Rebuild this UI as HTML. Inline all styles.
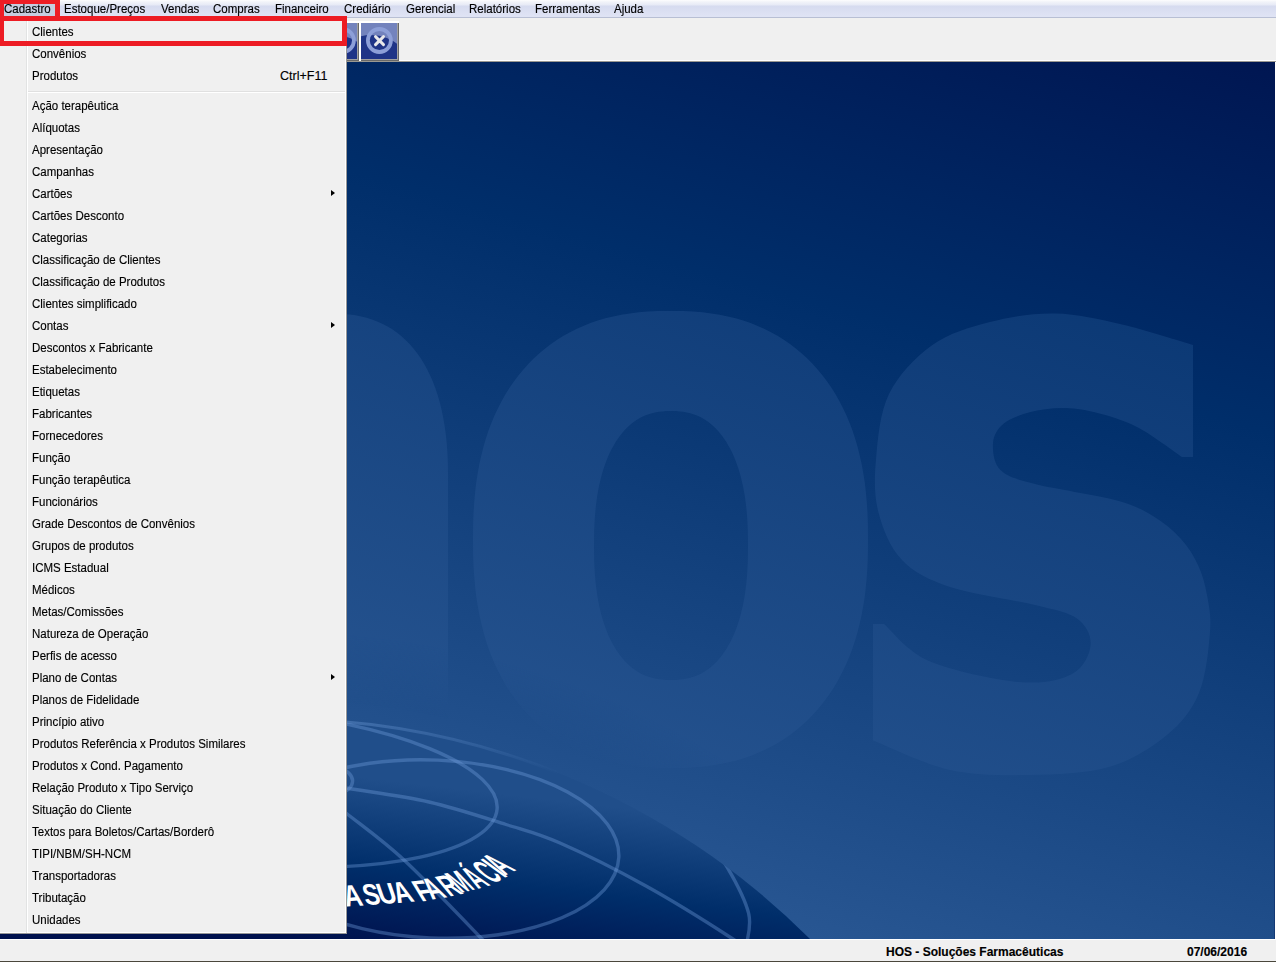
<!DOCTYPE html>
<html><head><meta charset="utf-8">
<style>
*{box-sizing:border-box}
html,body{margin:0;padding:0}
body{width:1276px;height:962px;position:relative;overflow:hidden;background:#f0f0f0;font-family:"Liberation Sans",sans-serif;font-size:12.5px;color:#000;-webkit-text-stroke:0.15px #000}
.abs{position:absolute}
#menubar{position:absolute;left:0;top:0;width:1276px;height:18px;background:linear-gradient(#fdfdfe 0px,#f1f3f9 2px,#e7eaf6 5px,#d6dbef 6px,#dfe3f4 16px);border-bottom:1px solid #b8bfd4}
.mb{position:absolute;top:2px;line-height:14px;white-space:nowrap;transform:scaleX(0.92);transform-origin:0 0}
#toolbar{position:absolute;left:0;top:18px;width:1276px;height:44px;background:#f0f0f0}
#bg{position:absolute;left:0;top:62px;width:1276px;height:877px;-webkit-text-stroke:0}
#popup{position:absolute;left:-2px;top:17px;width:349px;height:917px;background:#f0f0f0;border:1px solid #979797;box-shadow:inset -1px -1px 0 #fff}
.it{position:absolute;left:32px;height:22px;line-height:22px;white-space:nowrap;transform:scaleX(0.92);transform-origin:0 0}
.sc{position:absolute;left:280px;height:22px;line-height:22px;white-space:nowrap}
.arr{position:absolute;left:331px;width:0;height:0;border-top:3.5px solid transparent;border-bottom:3.5px solid transparent;border-left:4px solid #000}
#gut{position:absolute;left:26px;top:18px;width:2px;height:915px;border-left:1px solid #e2e3e3;border-right:1px solid #fff}
#sep{position:absolute;left:28px;top:91px;width:317px;height:2px;border-top:1px solid #e0e0e0;border-bottom:1px solid #fff}
#status{position:absolute;left:0;top:939px;width:1276px;height:23px;background:#f0f0f0;border-top:1px solid #fff;border-bottom:1px solid #4a473c}
.st{position:absolute;top:945px;font-weight:bold;font-size:12px;line-height:14px;white-space:nowrap}
.red{position:absolute;border:solid #ed1c24}
</style></head><body>
<div id="bg"><svg width="1276" height="877" viewBox="0 62 1276 877" style="display:block">
<defs>
<linearGradient id="gb" gradientUnits="userSpaceOnUse" x1="1276" y1="62" x2="943" y2="1229">
<stop offset="0" stop-color="rgb(0,22,82)"/><stop offset="0.295" stop-color="rgb(0,46,106)"/><stop offset="1" stop-color="rgb(56,102,162)"/>
</linearGradient>
<linearGradient id="gl" gradientUnits="userSpaceOnUse" x1="1276" y1="62" x2="825" y2="1415">
<stop offset="0" stop-color="rgb(0,45,105)"/><stop offset="1" stop-color="rgb(59,105,165)"/>
</linearGradient>
<linearGradient id="gg" gradientUnits="userSpaceOnUse" x1="425" y1="785" x2="405.7" y2="949.8">
<stop offset="0" stop-color="rgb(32,78,138)"/><stop offset="0.533" stop-color="rgb(0,46,106)"/><stop offset="1" stop-color="rgb(0,18,78)"/>
</linearGradient>
<linearGradient id="go" gradientUnits="userSpaceOnUse" x1="346" y1="0" x2="560" y2="0">
<stop offset="0" stop-color="#6d9ad6" stop-opacity="0.4"/><stop offset="0.6" stop-color="#6d9ad6" stop-opacity="0.2"/><stop offset="1" stop-color="#6d9ad6" stop-opacity="0"/>
</linearGradient>
<filter id="blur" x="-5%" y="-5%" width="110%" height="110%"><feGaussianBlur stdDeviation="0.7"/></filter>
<clipPath id="cg"><circle cx="279" cy="1470" r="751"/></clipPath>
<radialGradient id="gm" gradientUnits="userSpaceOnUse" cx="279" cy="1470" r="851"><stop offset="0" stop-color="#000"/><stop offset="0.905" stop-color="#000"/><stop offset="0.985" stop-color="#fff"/><stop offset="1" stop-color="#fff"/></radialGradient>
<mask id="lm" maskUnits="userSpaceOnUse" x="0" y="62" width="1276" height="877"><rect x="0" y="62" width="1276" height="877" fill="url(#gm)"/></mask>
</defs>
<rect x="0" y="62" width="1276" height="877" fill="url(#gb)"/>
<g fill="url(#gl)" mask="url(#lm)">
<path d="M868.0,539.5 L867.9,554.0 L867.5,565.7 L866.8,576.4 L865.9,586.6 L864.8,596.4 L863.3,605.7 L861.7,614.8 L859.7,623.6 L857.6,632.1 L855.1,640.4 L852.5,648.4 L849.5,656.2 L846.4,663.7 L842.9,671.0 L839.3,678.1 L835.4,684.9 L831.3,691.4 L826.9,697.8 L822.4,703.8 L817.6,709.6 L812.5,715.2 L807.3,720.5 L801.8,725.5 L796.1,730.3 L790.3,734.8 L784.2,739.0 L777.9,743.0 L771.4,746.6 L764.6,750.0 L757.7,753.1 L750.6,755.9 L743.2,758.4 L735.6,760.7 L727.8,762.6 L719.6,764.3 L711.2,765.6 L702.4,766.7 L693.1,767.4 L683.1,767.9 L670.5,768.0 L657.9,767.9 L647.9,767.4 L638.6,766.7 L629.8,765.6 L621.4,764.3 L613.2,762.6 L605.4,760.7 L597.8,758.4 L590.4,755.9 L583.3,753.1 L576.4,750.0 L569.6,746.6 L563.1,743.0 L556.8,739.0 L550.7,734.8 L544.9,730.3 L539.2,725.5 L533.7,720.5 L528.5,715.2 L523.4,709.6 L518.6,703.8 L514.1,697.8 L509.7,691.4 L505.6,684.9 L501.7,678.1 L498.1,671.0 L494.6,663.7 L491.5,656.2 L488.5,648.4 L485.9,640.4 L483.4,632.1 L481.3,623.6 L479.3,614.8 L477.7,605.7 L476.2,596.4 L475.1,586.6 L474.2,576.4 L473.5,565.7 L473.1,554.0 L473.0,539.5 L473.1,525.0 L473.5,513.3 L474.2,502.6 L475.1,492.4 L476.2,482.6 L477.7,473.3 L479.3,464.2 L481.3,455.4 L483.4,446.9 L485.9,438.6 L488.5,430.6 L491.5,422.8 L494.6,415.3 L498.1,408.0 L501.7,400.9 L505.6,394.1 L509.7,387.6 L514.1,381.2 L518.6,375.2 L523.4,369.4 L528.5,363.8 L533.7,358.5 L539.2,353.5 L544.9,348.7 L550.7,344.2 L556.8,340.0 L563.1,336.0 L569.6,332.4 L576.4,329.0 L583.3,325.9 L590.4,323.1 L597.8,320.6 L605.4,318.3 L613.2,316.4 L621.4,314.7 L629.8,313.4 L638.6,312.3 L647.9,311.6 L657.9,311.1 L670.5,311.0 L683.1,311.1 L693.1,311.6 L702.4,312.3 L711.2,313.4 L719.6,314.7 L727.8,316.4 L735.6,318.3 L743.2,320.6 L750.6,323.1 L757.7,325.9 L764.6,329.0 L771.4,332.4 L777.9,336.0 L784.2,340.0 L790.3,344.2 L796.1,348.7 L801.8,353.5 L807.3,358.5 L812.5,363.8 L817.6,369.4 L822.4,375.2 L826.9,381.2 L831.3,387.6 L835.4,394.1 L839.3,400.9 L842.9,408.0 L846.4,415.3 L849.5,422.8 L852.5,430.6 L855.1,438.6 L857.6,446.9 L859.7,455.4 L861.7,464.2 L863.3,473.3 L864.8,482.6 L865.9,492.4 L866.8,502.6 L867.5,513.3 L867.9,525.0Z M747.9,536.9 L747.8,530.1 L747.5,523.8 L747.2,517.8 L746.7,512.0 L746.2,506.5 L745.5,501.2 L744.8,496.0 L743.9,491.0 L743.0,486.1 L741.9,481.4 L740.8,476.8 L739.6,472.4 L738.2,468.1 L736.8,463.9 L735.3,459.9 L733.7,456.1 L732.0,452.3 L730.2,448.8 L728.3,445.4 L726.4,442.1 L724.3,439.0 L722.2,436.0 L720.0,433.2 L717.7,430.6 L715.3,428.1 L712.9,425.7 L710.3,423.6 L707.7,421.6 L705.0,419.8 L702.2,418.1 L699.3,416.6 L696.4,415.3 L693.3,414.2 L690.2,413.2 L686.9,412.4 L683.4,411.8 L679.8,411.4 L675.9,411.1 L671.0,411.0 L666.1,411.1 L662.2,411.4 L658.6,411.8 L655.1,412.4 L651.8,413.2 L648.7,414.2 L645.6,415.3 L642.7,416.6 L639.8,418.1 L637.0,419.8 L634.3,421.6 L631.7,423.6 L629.1,425.7 L626.7,428.1 L624.3,430.6 L622.0,433.2 L619.8,436.0 L617.7,439.0 L615.6,442.1 L613.7,445.4 L611.8,448.8 L610.0,452.3 L608.3,456.1 L606.7,459.9 L605.2,463.9 L603.8,468.1 L602.4,472.4 L601.2,476.8 L600.1,481.4 L599.0,486.1 L598.1,491.0 L597.2,496.0 L596.5,501.2 L595.8,506.5 L595.3,512.0 L594.8,517.8 L594.5,523.8 L594.2,530.1 L594.1,536.9 L594.0,545.5 L594.1,554.1 L594.2,560.9 L594.5,567.2 L594.8,573.2 L595.3,579.0 L595.8,584.5 L596.5,589.8 L597.2,595.0 L598.1,600.0 L599.0,604.9 L600.1,609.6 L601.2,614.2 L602.4,618.6 L603.8,622.9 L605.2,627.1 L606.7,631.1 L608.3,634.9 L610.0,638.7 L611.8,642.2 L613.7,645.6 L615.6,648.9 L617.7,652.0 L619.8,655.0 L622.0,657.8 L624.3,660.4 L626.7,662.9 L629.1,665.3 L631.7,667.4 L634.3,669.4 L637.0,671.2 L639.8,672.9 L642.7,674.4 L645.6,675.7 L648.7,676.8 L651.8,677.8 L655.1,678.6 L658.6,679.2 L662.2,679.6 L666.1,679.9 L671.0,680.0 L675.9,679.9 L679.8,679.6 L683.4,679.2 L686.9,678.6 L690.2,677.8 L693.3,676.8 L696.4,675.7 L699.3,674.4 L702.2,672.9 L705.0,671.2 L707.7,669.4 L710.3,667.4 L712.9,665.3 L715.3,662.9 L717.7,660.4 L720.0,657.8 L722.2,655.0 L724.3,652.0 L726.4,648.9 L728.3,645.6 L730.2,642.2 L732.0,638.7 L733.7,634.9 L735.3,631.1 L736.8,627.1 L738.2,622.9 L739.6,618.6 L740.8,614.2 L741.9,609.6 L743.0,604.9 L743.9,600.0 L744.8,595.0 L745.5,589.8 L746.2,584.5 L746.7,579.0 L747.2,573.2 L747.5,567.2 L747.8,560.9 L747.9,554.1 L748.0,545.5Z" fill-rule="evenodd"/>
<path d="M220,314 L338,314 C402,314 448,365 448,473 L448,770 L220,770 Z"/>
<path d="M1193,343 L1193,457 L1182,457 C1174.5,452.0 1151.5,434.4 1137.0,427.0 C1122.5,419.6 1107.2,415.5 1094.7,412.3 C1082.2,409.1 1072.9,408.0 1062.0,408.0 C1051.1,408.0 1039.2,409.7 1029.5,412.3 C1019.8,414.9 1009.6,418.6 1003.5,423.7 C997.4,428.8 993.5,435.3 993.0,443.0 C992.5,450.7 993.5,463.2 1000.5,470.0 C1007.5,476.8 1015.9,479.0 1035.0,484.0 C1054.1,489.0 1095.3,494.7 1115.0,500.0 C1134.7,505.3 1142.0,509.5 1153.0,516.0 C1164.0,522.5 1173.5,530.8 1181.0,539.0 C1188.5,547.2 1193.7,555.7 1198.0,565.0 C1202.3,574.3 1205.0,583.8 1207.0,595.0 C1209.0,606.2 1211.3,615.7 1210.0,632.0 C1208.7,648.3 1206.2,675.8 1199.0,693.0 C1191.8,710.2 1182.0,722.7 1167.0,735.0 C1152.0,747.3 1131.9,760.3 1109.0,767.0 C1086.1,773.7 1056.1,774.5 1029.6,775.0 C1003.1,775.5 976.1,775.7 950.0,770.0 C923.9,764.3 885.8,745.5 873.0,740.6 L873,624 L884,624 C891.5,630.2 906.5,651.3 929.0,661.0 C951.5,670.7 995.2,679.8 1019.0,682.0 C1042.8,684.2 1060.1,680.2 1072.0,674.0 C1083.9,667.8 1089.8,654.2 1090.6,645.0 C1091.4,635.8 1086.3,625.3 1077.0,618.6 C1067.7,611.9 1056.2,610.3 1035.0,605.0 C1013.8,599.7 972.2,594.5 950.0,587.0 C927.8,579.5 913.9,572.4 902.0,560.0 C890.1,547.6 882.8,529.4 878.5,512.6 C874.2,495.9 874.2,479.3 876.0,459.5 C877.8,439.7 879.7,413.0 889.0,394.0 C898.3,375.0 914.9,357.4 931.7,345.4 C948.5,333.4 969.5,327.3 990.0,322.0 C1010.5,316.7 1033.0,313.1 1055.0,313.5 C1077.0,313.9 1099.0,319.2 1122.0,324.5 C1145.0,329.8 1181.2,341.6 1193.0,345.0 Z"/>
</g>
<circle cx="279" cy="1470" r="751" fill="url(#gg)"/>
<circle cx="279" cy="1470" r="751" fill="none" stroke="url(#go)" stroke-width="3"/>
<g clip-path="url(#cg)"><g fill="none" stroke="#6b98d6" stroke-opacity="0.4" stroke-width="3.4" filter="url(#blur)">
<ellipse cx="251" cy="788" rx="247" ry="77" transform="rotate(4.9 251 788)"/>
<ellipse cx="434" cy="849" rx="185" ry="89" transform="rotate(2.6 434 849)"/>
<ellipse cx="300" cy="781" rx="52.6" ry="20.6"/>
<path d="M300,780 C307.7,781.3 324.5,784.3 346.0,788.0 C367.5,791.7 402.3,795.9 429.0,802.0 C455.7,808.1 484.2,817.7 506.0,824.5 C527.8,831.3 536.7,832.8 560.0,843.0 C583.3,853.2 617.5,870.2 646.0,886.0 C674.5,901.8 712.0,925.4 731.0,937.7 C750.0,950.0 755.2,956.3 760.0,960.0"/>
<path d="M320,792 C324.3,795.5 332.0,801.7 346.0,813.0 C360.0,824.3 381.7,839.3 404.0,860.0 C426.3,880.7 464.0,920.3 480.0,937.0 C496.0,953.7 496.7,956.2 500.0,960.0"/>
<path d="M700,830 C704.7,836.4 719.9,854.7 728.0,868.6 C736.1,882.5 745.6,900.9 748.7,913.6 C751.8,926.3 746.9,939.8 746.5,945.0"/>
</g></g>
<g fill="#fff" font-family="Liberation Sans" font-weight="bold"><text font-size="30" transform="matrix(0.8388,-0.0440,0.2493,1.0000,346,906.5)">A</text><text font-size="29.5" transform="matrix(0.8189,-0.0429,0.2867,1.0000,366,905)">S</text><text font-size="29" transform="matrix(0.8579,-0.0600,0.3443,1.0000,381,904)">U</text><text font-size="29" transform="matrix(0.8567,-0.0750,0.4245,1.0000,397.5,903)">A</text><text font-size="29" transform="matrix(0.7956,-0.0836,0.6009,1.0000,421.5,901.5)">F</text><text font-size="28.5" transform="matrix(0.7724,-0.1086,0.7265,1.0000,432,899.5)">A</text><text font-size="28" transform="matrix(0.7264,-0.1412,0.8391,1.0000,449.5,896.5)">R</text><text font-size="27.5" transform="matrix(0.6598,-0.1645,0.9657,1.0000,461,893)">M</text><text font-size="27" transform="matrix(0.6694,-0.2047,1.1106,1.0000,478,889)">Á</text><text font-size="27" transform="matrix(0.6390,-0.2326,1.2349,1.0000,492,883.5)">C</text><text font-size="26" transform="matrix(0.6444,-0.2735,1.3764,1.0000,504,878)">I</text><text font-size="25" transform="matrix(0.6525,-0.3043,1.4826,1.0000,505,875.5)">A</text></g>
</svg></div>
<div id="menubar"></div>
<span class="mb" style="left:4px">Cadastro</span>
<span class="mb" style="left:64px">Estoque/Preços</span>
<span class="mb" style="left:161px">Vendas</span>
<span class="mb" style="left:213px">Compras</span>
<span class="mb" style="left:275px">Financeiro</span>
<span class="mb" style="left:344px">Crediário</span>
<span class="mb" style="left:406px">Gerencial</span>
<span class="mb" style="left:469px">Relatórios</span>
<span class="mb" style="left:535px">Ferramentas</span>
<span class="mb" style="left:614px">Ajuda</span>
<div id="hl" class="abs" style="left:4px;top:4px;width:51px;height:12px;background:#c6cde0"></div>
<span class="mb" style="left:4px">Cadastro</span>
<div id="toolbar"></div>
<div class="abs" style="left:359px;top:21px;width:40px;height:40px;background:#fff"></div>
<div class="abs" style="left:361px;top:23px;width:38px;height:38px;background:#696969"></div>
<div class="abs" style="left:361px;top:23px;width:37px;height:37px;background:#a0a0a0"></div>
<div class="abs" style="left:361px;top:23px;width:36px;height:36px"><svg width="36" height="36" viewBox="0 0 36 36" style="display:block"><rect width="36" height="36" fill="#7383bd"/><circle cx="10" cy="55" r="43" fill="#1f3487"/><circle cx="18.4" cy="17.5" r="11.5" fill="none" stroke="#8d9fd8" stroke-width="3.8"/><path d="M14.5,13.6 L22.5,21.6 M22.5,13.6 L14.5,21.6" stroke="#e8e8ea" stroke-width="2.9" stroke-linecap="round"/></svg></div>
<div class="abs" style="left:340px;top:21px;width:19px;height:40px;overflow:hidden"><div class="abs" style="left:-17px;top:0;width:36px;height:40px;background:#fff"></div><div class="abs" style="left:-16px;top:2px;width:35px;height:38px;background:#696969"></div><div class="abs" style="left:-16px;top:2px;width:34px;height:37px;background:#a0a0a0"></div><div class="abs" style="left:-16px;top:2px;width:33px;height:36px;overflow:hidden"><div class="abs" style="left:0;top:0"><svg width="36" height="36" viewBox="0 0 36 36" style="display:block"><rect width="36" height="36" fill="#7383bd"/><circle cx="10" cy="55" r="43" fill="#1f3487"/><circle cx="18.4" cy="17.5" r="11.5" fill="none" stroke="#8d9fd8" stroke-width="3.8"/></svg></div></div></div>
<div class="abs" style="left:399px;top:60px;width:877px;height:1px;background:#fff"></div>
<div class="abs" style="left:0;top:61px;width:1276px;height:1px;background:#9a9891"></div>
<div id="popup"></div>
<div id="gut"></div>
<div id="sep"></div>
<div class="it" style="top:21px">Clientes</div>
<div class="it" style="top:43px">Convênios</div>
<div class="it" style="top:65px">Produtos</div>
<div class="sc" style="top:65px">Ctrl+F11</div>
<div class="it" style="top:95px">Ação terapêutica</div>
<div class="it" style="top:117px">Alíquotas</div>
<div class="it" style="top:139px">Apresentação</div>
<div class="it" style="top:161px">Campanhas</div>
<div class="it" style="top:183px">Cartões</div>
<div class="arr" style="top:190px"></div>
<div class="it" style="top:205px">Cartões Desconto</div>
<div class="it" style="top:227px">Categorias</div>
<div class="it" style="top:249px">Classificação de Clientes</div>
<div class="it" style="top:271px">Classificação de Produtos</div>
<div class="it" style="top:293px">Clientes simplificado</div>
<div class="it" style="top:315px">Contas</div>
<div class="arr" style="top:322px"></div>
<div class="it" style="top:337px">Descontos x Fabricante</div>
<div class="it" style="top:359px">Estabelecimento</div>
<div class="it" style="top:381px">Etiquetas</div>
<div class="it" style="top:403px">Fabricantes</div>
<div class="it" style="top:425px">Fornecedores</div>
<div class="it" style="top:447px">Função</div>
<div class="it" style="top:469px">Função terapêutica</div>
<div class="it" style="top:491px">Funcionários</div>
<div class="it" style="top:513px">Grade Descontos de Convênios</div>
<div class="it" style="top:535px">Grupos de produtos</div>
<div class="it" style="top:557px">ICMS Estadual</div>
<div class="it" style="top:579px">Médicos</div>
<div class="it" style="top:601px">Metas/Comissões</div>
<div class="it" style="top:623px">Natureza de Operação</div>
<div class="it" style="top:645px">Perfis de acesso</div>
<div class="it" style="top:667px">Plano de Contas</div>
<div class="arr" style="top:674px"></div>
<div class="it" style="top:689px">Planos de Fidelidade</div>
<div class="it" style="top:711px">Princípio ativo</div>
<div class="it" style="top:733px">Produtos Referência x Produtos Similares</div>
<div class="it" style="top:755px">Produtos x Cond. Pagamento</div>
<div class="it" style="top:777px">Relação Produto x Tipo Serviço</div>
<div class="it" style="top:799px">Situação do Cliente</div>
<div class="it" style="top:821px">Textos para Boletos/Cartas/Borderô</div>
<div class="it" style="top:843px">TIPI/NBM/SH-NCM</div>
<div class="it" style="top:865px">Transportadoras</div>
<div class="it" style="top:887px">Tributação</div>
<div class="it" style="top:909px">Unidades</div>
<div class="abs" style="left:1275px;top:62px;width:1px;height:877px;background:#fff"></div>
<div class="abs" style="left:1274px;top:62px;width:1px;height:877px;background:rgba(0,20,80,0.35)"></div>
<div id="status"></div>
<div class="st" style="left:886px">HOS - Soluções Farmacêuticas</div>
<div class="st" style="left:1187px">07/06/2016</div>
<div class="red" style="left:0;top:0;width:60px;height:21px;border-width:4px 5px 5px 4px"></div>
<div class="red" style="left:0;top:16px;width:347px;height:30px;border-width:5px 5px 5px 4px"></div>
</body></html>
